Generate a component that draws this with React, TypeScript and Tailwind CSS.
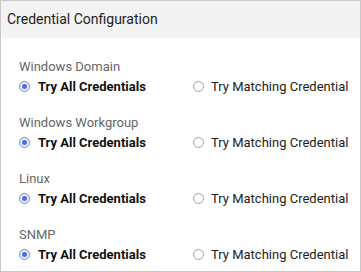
import React from 'react';

const sections = ['Windows Domain', 'Windows Workgroup', 'Linux', 'SNMP'];

const Radio = ({ checked }: { checked: boolean }) =>
  checked ? (
    <span className="flex size-[11px] items-center justify-center rounded-full border border-[#6d86ee] bg-[#e9eeff]">
      <span className="size-[5px] rounded-full bg-[#4d6ce6]" />
    </span>
  ) : (
    <span className="size-[11px] rounded-full border border-[#a0a0a0] bg-white" />
  );

const App = () => {
  return (
    <div
      className="w-[361px] h-[272px] border border-[#c9c9c9] bg-white overflow-hidden"
      style={{ fontFamily: 'Roboto, "Liberation Sans", sans-serif' }}
    >
      <div className="h-[37px] bg-[#f3f3f3] px-[6px] flex items-center text-[14px] text-[#1e1e1e]">
        Credential Configuration
      </div>

      <div className="pt-[21px] pl-[18px] flex flex-col gap-[20px]">
        {sections.map((name) => (
          <div key={name} className="flex flex-col gap-[2px]">
            <div className="h-[16px] leading-[16px] text-[13px] text-[#666]">{name}</div>
            <div className="grid grid-cols-[174px_1fr] h-[18px] items-center text-[13px]">
              <label className="flex items-center gap-[8px]">
                <Radio checked />
                <span className="font-bold text-[#111]">Try All Credentials</span>
              </label>
              <label className="flex items-center gap-[7px]">
                <Radio checked={false} />
                <span className="text-[#222]">Try Matching Credential</span>
              </label>
            </div>
          </div>
        ))}
      </div>
    </div>
  );
};

export default App;
